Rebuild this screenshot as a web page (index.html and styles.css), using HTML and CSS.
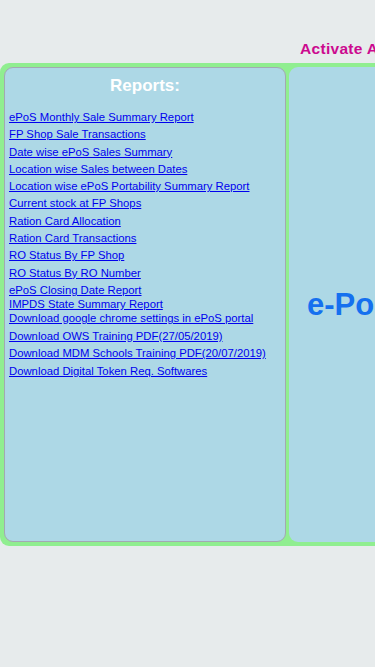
FILE: index.html
```html
<!DOCTYPE html>
<html lang="en">
<head>
    <meta charset="UTF-8">
    <meta name="viewport" content="width=device-width, initial-scale=1.0">
    <title>ePoS Reports</title>
    <link rel="stylesheet" href="styles.css">
</head>
<body>
    <div class="notice">Activate Aadhaar based ePoS transactions</div>
    <div class="frame">
        <div class="reports">
            <h2>Reports:</h2>
            <ul>
                <li><a href="#">ePoS Monthly Sale Summary Report</a></li>
                <li><a href="#">FP Shop Sale Transactions</a></li>
                <li><a href="#">Date wise ePoS Sales Summary</a></li>
                <li><a href="#">Location wise Sales between Dates</a></li>
                <li><a href="#">Location wise ePoS Portability Summary Report </a></li>
                <li><a href="#">Current stock at FP Shops</a></li>
                <li><a href="#">Ration Card Allocation</a></li>
                <li><a href="#">Ration Card Transactions</a></li>
                <li><a href="#">RO Status By FP Shop</a></li>
                <li><a href="#">RO Status By RO Number</a></li>
                <li class="tight"><a href="#">ePoS Closing Date Report </a></li>
                <li class="tight"><a href="#">IMPDS State Summary Report</a></li>
                <li class="wide"><a href="#">Download google chrome settings in ePoS portal </a></li>
                <li><a href="#">Download OWS Training PDF(27/05/2019) </a></li>
                <li><a href="#">Download MDM Schools Training PDF(20/07/2019) </a></li>
                <li><a href="#">Download Digital Token Req. Softwares </a></li>
            </ul>
        </div>
        <div class="banner">
            <h1>e-PoS Portal</h1>
        </div>
    </div>
</body>
</html>
```

FILE: styles.css
```css
html, body {
    overflow-x: hidden;
}

body {
    margin: 0;
    background-color: #e7ebec;
    font-family: "Liberation Sans", Arial, sans-serif;
}

.notice {
    padding: 40px 0 0 300px;
    height: 23px;
    white-space: nowrap;
    color: #cc0a8f;
    font-size: 15.5px;
    font-weight: bold;
    letter-spacing: 0.3px;
}

.frame {
    display: flex;
    gap: 3px;
    width: 760px;
    padding: 4px;
    background-color: #90ee90;
    border-radius: 9px;
}

.reports {
    flex: 0 0 272px;
    height: 473px;
    padding: 0 4px;
    background-color: #add8e6;
    border: 1px solid #a3a9b1;
    border-radius: 9px;
}

.reports h2 {
    margin: 8px 0 14px;
    text-align: center;
    color: #fff;
    font-size: 17px;
    line-height: 20px;
}

ul {
    list-style: none;
    padding: 0;
    margin: 0;
}

li {
    font-size: 11.3px;
    line-height: 14px;
    margin-bottom: 3.3px;
    white-space: nowrap;
}

li.tight {
    margin-bottom: 0;
}

li.wide {
    margin-bottom: 4px;
}

a {
    color: #0000ee;
}

.banner {
    flex: 1;
    display: flex;
    align-items: center;
    padding-left: 18px;
    background-color: #add8e6;
    border-radius: 9px;
}

.banner h1 {
    margin: 0;
    color: #1570ef;
    font-size: 31px;
    white-space: nowrap;
}
```
